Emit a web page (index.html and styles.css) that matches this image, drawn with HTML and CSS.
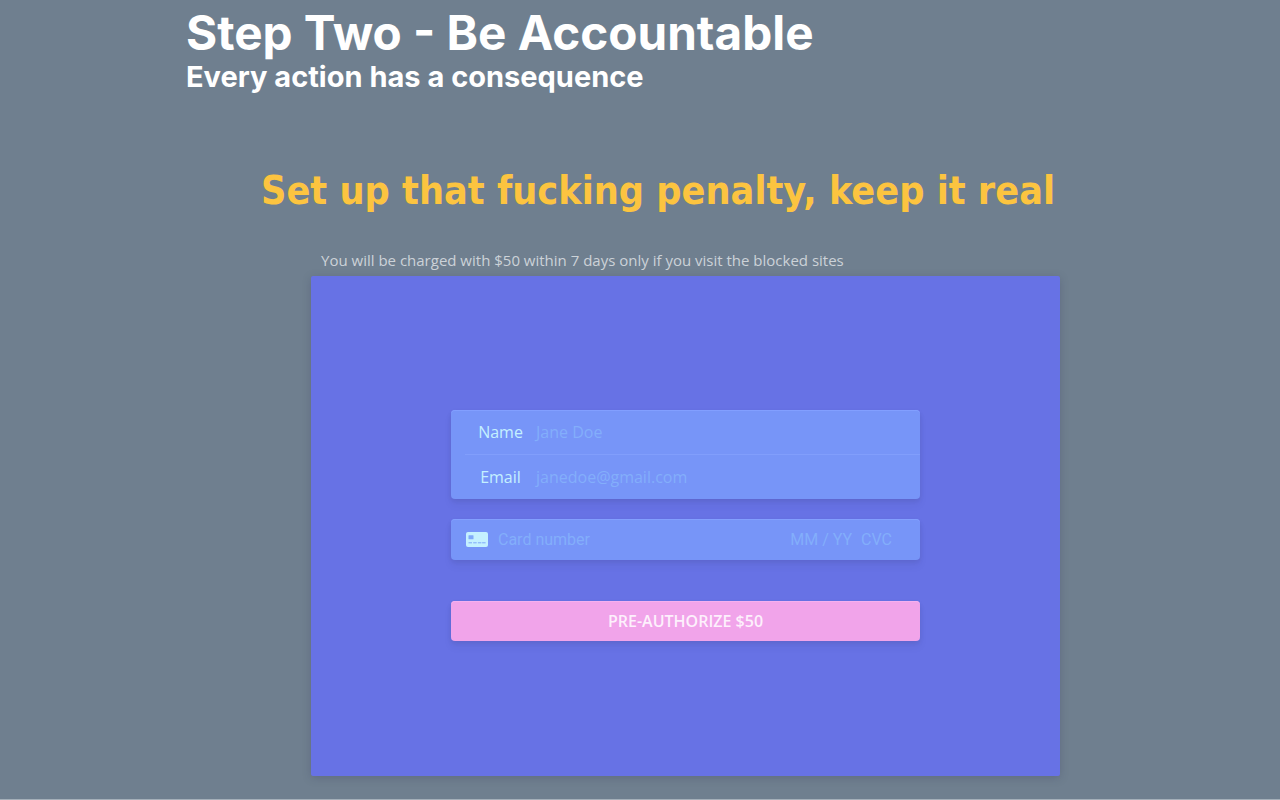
FILE: index.html
```html
<!DOCTYPE html>
<html lang="en">
<head>
  <meta charset="UTF-8">
  <meta name="viewport" content="width=device-width, initial-scale=1.0">
  <title>Step Two - Be Accountable</title>
  <link rel="stylesheet" href="styles.css">
</head>
<body>

  <header class="step-header">
    <h1 class="step-title">Step Two - Be Accountable</h1>
    <h2 class="step-subtitle">Every action has a consequence</h2>
  </header>

  <main class="penalty">
    <h3 class="penalty-title">Set up that fucking penalty, keep it real</h3>
    <div class="checkout">
      <p class="checkout-note">You will be charged with $50 within 7 days only if you visit the blocked sites</p>
      <form class="card-panel">
        <div class="field-group">
          <div class="field">
            <label class="field-label">Name</label>
            <span class="field-placeholder">Jane Doe</span>
          </div>
          <div class="field">
            <label class="field-label">Email</label>
            <span class="field-placeholder">janedoe@gmail.com</span>
          </div>
        </div>
        <div class="field-group card-row">
          <svg class="card-icon" viewBox="0 0 22 15" aria-hidden="true">
            <rect class="card-icon-body" width="22" height="15" rx="2"></rect>
            <rect class="card-icon-chip" x="2.500" y="3.300" width="5" height="4" rx=".5"></rect>
            <path class="card-icon-dash" d="M2.500 10.800h3.500M7.200 10.800h3.500M11.900 10.800h3.500M16.100 10.800h3.500"></path>
          </svg>
          <span class="card-number">Card number</span>
          <span class="card-date">MM / YY</span>
          <span class="card-cvc">CVC</span>
        </div>
        <button class="pay-button" type="button">PRE-AUTHORIZE $50</button>
      </form>
    </div>
  </main>

</body>
</html>
```

FILE: styles.css
```css
/* === Reset === */
*, *::before, *::after { box-sizing: border-box; }
html, body { height: 100%; }
body {
  background: #6f7f8f;
  border-bottom: 1px solid #a4afb9;
  color: #fff;
  font-family: Inter, sans-serif;
  margin: 0;
  overflow: hidden;
}

/* === Header === */
.step-header { padding: 7px 0 0 186px; }
.step-title {
  font-size: 47.650px;
  font-weight: 700;
  line-height: 52px;
  margin: 0;
}
.step-subtitle {
  font-size: 29px;
  font-weight: 700;
  line-height: 36px;
  margin: 0;
}

/* === Penalty === */
.penalty-title {
  color: #fcc440;
  font-family: "DejaVu Sans", sans-serif;
  font-size: 39.200px;
  font-stretch: condensed;
  font-weight: 700;
  line-height: 44px;
  margin: 74px 0 0;
  padding-left: 261px;
  white-space: nowrap;
}
.checkout {
  margin-left: 311px;
  margin-top: 37px;
  width: 749px;
}
.checkout-note {
  color: #ccd2d8;
  font-family: "Open Sans", sans-serif;
  font-size: 15px;
  line-height: 20px;
  margin: 0;
  padding: 0 0 6px 10px;
}

/* === Card panel === */
.card-panel {
  align-items: center;
  background: #6772e5;
  border-radius: 2px;
  box-shadow: 0 2px 8px rgba(50, 50, 93, .25);
  display: flex;
  flex-direction: column;
  height: 500px;
  padding-top: 134px;
}
.field-group {
  background: #7795f8;
  border-radius: 4px;
  box-shadow: 0 6px 9px rgba(50, 50, 93, .06), 0 2px 5px rgba(0, 0, 0, .08), inset 0 1px 0 #829fff;
  margin-bottom: 20px;
  width: 469px;
}
.field {
  align-items: center;
  display: flex;
  font-family: "Open Sans", sans-serif;
  font-size: 16px;
  height: 44px;
  margin-left: 14px;
}
.field + .field {
  border-top: 1px solid #819efc;
  height: 45px;
}
.field-label {
  color: #c4f0ff;
  flex: none;
  text-align: center;
  width: 71px;
}
.field-placeholder { color: #83aefb; }

/* === Card row === */
.card-row {
  align-items: center;
  color: #83aefb;
  display: flex;
  font-family: Roboto, sans-serif;
  font-size: 16px;
  height: 41px;
  margin-bottom: 41px;
  padding: 0 28px 0 15px;
}
.card-icon {
  flex: none;
  height: 15px;
  margin-right: 10px;
  width: 22px;
}
.card-icon-body { fill: #c4f0ff; }
.card-icon-chip { fill: #7fa9fa; }
.card-icon-dash {
  fill: none;
  stroke: #7fa9fa;
  stroke-width: 1;
}
.card-number { flex: 1; }
.card-date { margin-right: 9px; }

/* === Button === */
.pay-button {
  background: #f1a4ea;
  border: 0;
  border-radius: 4px;
  box-shadow: 0 6px 9px rgba(50, 50, 93, .06), 0 2px 5px rgba(0, 0, 0, .08), inset 0 1px 0 #f5b0ef;
  color: #fdf0fc;
  font-family: "Open Sans", sans-serif;
  font-size: 16px;
  font-weight: 600;
  height: 40px;
  padding: 0;
  width: 469px;
}
```
